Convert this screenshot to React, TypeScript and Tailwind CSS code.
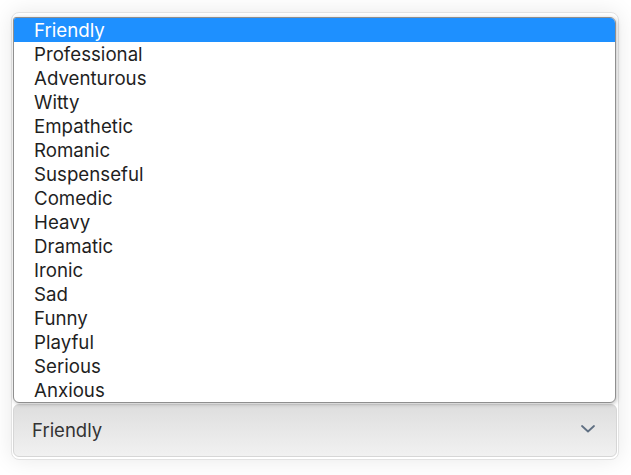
const tones = [
  "Friendly",
  "Professional",
  "Adventurous",
  "Witty",
  "Empathetic",
  "Romanic",
  "Suspenseful",
  "Comedic",
  "Heavy",
  "Dramatic",
  "Ironic",
  "Sad",
  "Funny",
  "Playful",
  "Serious",
  "Anxious",
];

export default function App() {
  const selected = "Friendly";

  return (
    <div className="min-h-screen bg-white px-[11px] pt-[12px] font-['Inter',sans-serif] select-none">
      {/* Card */}
      <div className="relative h-[448px] w-[608px] rounded-lg border border-[#e2e2e2] bg-white shadow-[0_0_22px_rgba(0,0,0,0.09)] flex flex-col justify-end px-px pb-[2px]">
        {/* Open listbox */}
        <ul className="absolute left-px top-[4px] w-[603px] h-[386px] overflow-hidden rounded-md rounded-tl-[3px] border-[1.5px] border-[#8f8f8f] bg-white shadow-[1px_1px_4px_rgba(0,0,0,0.25)]">
          {tones.map((t) => (
            <li
              key={t}
              className={`h-6 pl-[20px] text-[18.7px] leading-6 pt-px ${t === selected ? "bg-[#1e90ff] text-white" : "text-[#1f1f1f]"}`}
            >
              {t}
            </li>
          ))}
        </ul>

        {/* Select trigger */}
        <div className="h-[53px] rounded-md border border-[#d6d6d6] bg-gradient-to-b from-[#dedede] to-[#f1f1f1] flex items-center justify-between pl-[18px] pr-[21px]">
          <span className="text-[18.5px] text-[#333333]">{selected}</span>
          <svg width="14" height="8" viewBox="0 0 14 8" className="-mt-[3px]">
            <polyline points="1,1 7,6.5 13,1" fill="none" stroke="#5f6f82" strokeWidth="1.8" strokeLinecap="round" strokeLinejoin="round" />
          </svg>
        </div>
      </div>
    </div>
  );
}
